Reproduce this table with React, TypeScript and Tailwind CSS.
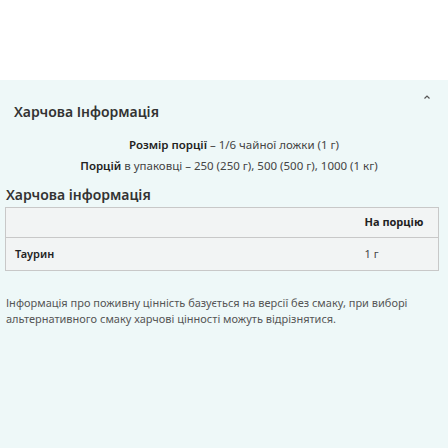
export default function App() {
  return (
    <div className="w-[448px] h-[448px] bg-white font-['Noto_Sans',sans-serif] text-[#333]">
      <div className="h-[80px]" />
      <section className="bg-[#eef8f8] h-[368px]">
        <div className="flex items-start justify-between pl-[14px] pr-[16px] pt-[20px]">
          <h2 className="text-[14px] font-semibold leading-[24px]">Харчова Інформація</h2>
          <svg width="10" height="10" viewBox="0 0 10 10" className="-mt-[8px]">
            <path d="M2.5 6.5 L5 4 L7.5 6.5" fill="none" stroke="#555" strokeWidth="1.2" />
          </svg>
        </div>
        <div className="mt-[10px] text-center text-[11.5px] leading-[21px] text-[#444]">
          <p className="pl-[20px]">
            <b className="font-semibold text-[#222]">Розмір порції</b> – 1/6 чайної ложки (1 г)
          </p>
          <p className="pl-[10px]">
            <b className="font-semibold text-[#222]">Порцій</b> в упаковці – 250 (250 г), 500 (500 г), 1000 (1 кг)
          </p>
        </div>
        <h3 className="mt-[7px] pl-[6px] text-[14px] font-semibold leading-[24px]">Харчова інформація</h3>
        <table className="ml-[5px] w-[434px] border-collapse bg-[#f2f4f4]">
          <tbody>
            <tr className="h-[30px]">
              <td className="border border-[#c8c8c8] border-r-0" />
              <td className="w-[82px] border border-[#c8c8c8] border-l-0 pl-[8px] text-[11px] font-bold text-[#222]">На порцію</td>
            </tr>
            <tr className="h-[33px]">
              <td className="border border-[#c8c8c8] border-r-0 pl-[9px] text-[11px] font-semibold text-[#222]">Таурин</td>
              <td className="border border-[#c8c8c8] border-l-0 pl-[8px] text-[11px] text-[#444]">1 г</td>
            </tr>
          </tbody>
        </table>
        <p className="mt-[24px] px-[6px] text-[11px] leading-[16px] text-[#555]">
          Інформація про поживну цінність базується на версії без смаку, при виборі альтернативного смаку харчові цінності можуть відрізнятися.
        </p>
      </section>
    </div>
  );
}
